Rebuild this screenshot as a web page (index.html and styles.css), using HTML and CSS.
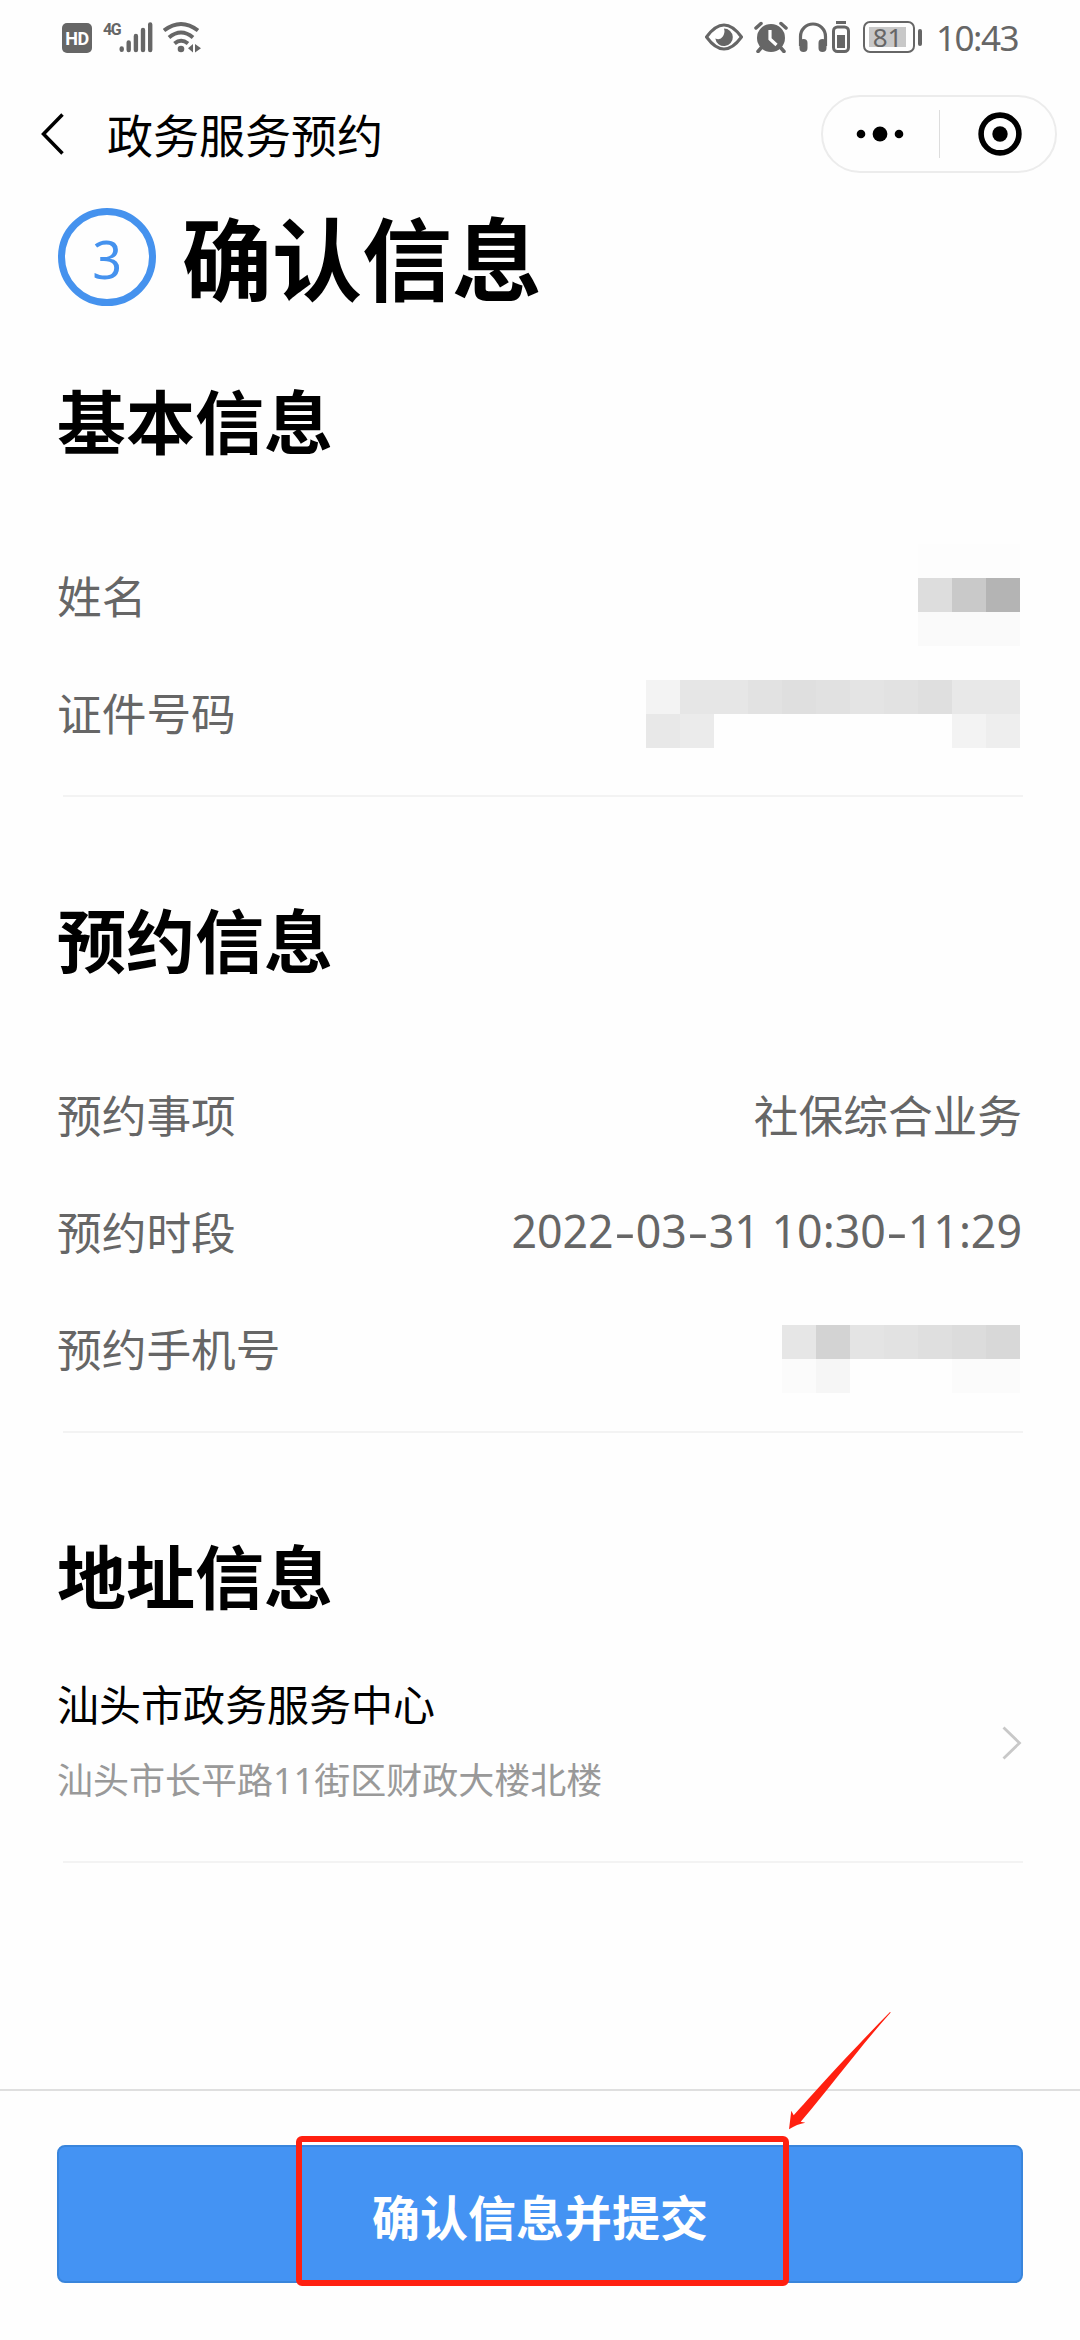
FILE: index.html
```html
<!DOCTYPE html>
<html lang="zh-CN">
<head>
    <meta charset="UTF-8">
    <meta name="viewport" content="width=device-width, initial-scale=1.0">
    <title>政务服务预约</title>
    <link rel="stylesheet" href="styles.css">
</head>
<body>

<div class="page">
    <div class="status-bar">
        <div class="status-left">
            <span class="hd">HD</span>
            <span class="net">4G</span>
            <svg class="signal" width="34" height="32" viewBox="0 0 34 32">
                <g stroke="#666" stroke-width="4.4" stroke-linecap="round">
                    <path d="M2.7 27.5v1.3M9.7 21.5v7.5M16.9 15v14M24 9v20M31.2 3.5V29"/>
                </g>
            </svg>
            <svg width="38" height="32" viewBox="0 0 38 32">
                <g fill="none" stroke="#666" stroke-width="4">
                    <path d="M1 9.500Q18 -3.500 35 9.500"/>
                    <path d="M6 16.500Q18 6.500 30 16.500"/>
                    <path d="M11.500 22.500Q18 17 25 22.500"/>
                </g>
                <circle cx="18" cy="28" r="3.300" fill="#666"/>
                <path d="M30 23v8.500l-5-4.200zM32 23v8.500l6-4.200z" fill="#666"/>
            </svg>
        </div>
        <div class="status-right">
            <svg class="eye" width="38" height="28" viewBox="0 0 38 28">
                <path d="M1.500 14Q19-10 36.500 14Q19 38 1.500 14z" fill="none" stroke="#666" stroke-width="3"/>
                <path d="M19 5.500a8.800 8.800 0 1 1-8.700 10q5 2 7.500-2t1.200-8z" fill="#666"/>
            </svg>
            <svg class="alarm" width="34" height="32" viewBox="0 0 34 32">
                <circle cx="17" cy="17" r="14" fill="#666"/>
                <path d="M2 7l5-4.500M32 7l-5-4.500M7 27l-3 3.500M27 27l3 3.500" stroke="#666" stroke-width="3.500" stroke-linecap="round"/>
                <path d="M16 9v9l6.500 6" fill="none" stroke="#fff" stroke-width="3.200"/>
            </svg>
            <svg class="headphones" width="30" height="32" viewBox="0 0 30 32">
                <path d="M2.500 25V15.500a12.500 12.500 0 0 1 25 0V25" fill="none" stroke="#666" stroke-width="3.200"/>
                <rect x="1.500" y="18" width="8" height="13" rx="4" fill="#666"/>
                <rect x="20.500" y="18" width="8" height="13" rx="4" fill="#666"/>
            </svg>
            <svg class="mini-battery" width="18" height="32" viewBox="0 0 18 32">
                <path d="M4 1.500h10" stroke="#666" stroke-width="3"/>
                <rect x="1.500" y="6" width="15" height="24.500" rx="4" fill="none" stroke="#666" stroke-width="3"/>
                <rect x="5" y="14" width="8" height="13" fill="#666"/>
            </svg>
            <span class="battery"><span class="battery-level">81</span></span>
            <span class="battery-tip"></span>
            <span class="time">10:43</span>
        </div>
    </div>

    <div class="nav">
        <svg width="24" height="42" viewBox="0 0 24 42">
            <path d="M21.500 1.500L2.500 21L21.500 40.500" fill="none" stroke="#000" stroke-width="3.500"/>
        </svg>
        <div class="nav-title">政务服务预约</div>
        <div class="capsule">
            <svg class="more" width="48" height="16" viewBox="0 0 48 16">
                <circle cx="5" cy="8" r="4.300"/>
                <circle cx="24" cy="8" r="7.400"/>
                <circle cx="43" cy="8" r="4.300"/>
            </svg>
            <span class="capsule-line"></span>
            <svg class="close" width="44" height="44" viewBox="0 0 44 44">
                <circle cx="22" cy="22" r="18.900" fill="none" stroke="#000" stroke-width="5.600"/>
                <circle cx="22" cy="22" r="7.700"/>
            </svg>
        </div>
    </div>

    <div class="step">
        <span class="step-number">3</span>
        <h1>确认信息</h1>
    </div>

    <div class="section first">
        <h2>基本信息</h2>
        <div class="row">
            <span>姓名</span>
            <svg class="mosaic" width="102" height="102" viewBox="0 0 3 3" shape-rendering="crispEdges">
                <path d="M0 0h3v1H0z" fill="#fdfdfd"/>
                <path d="M0 1h1v1H0z" fill="#ddd"/>
                <path d="M1 1h1v1H1z" fill="#c9c9c9"/>
                <path d="M2 1h1v1H2z" fill="#b4b4b4"/>
                <path d="M0 2h3v1H0z" fill="#fafafa"/>
            </svg>
        </div>
        <div class="row">
            <span>证件号码</span>
            <svg class="mosaic card" width="374" height="68" viewBox="0 0 11 2" shape-rendering="crispEdges">
                <path d="M0 0h1v1H0z" fill="#f3f3f3"/>
                <path d="M1 0h2v1H1z" fill="#e6e6e6"/>
                <path d="M3 0h1v1H3z" fill="#e2e2e2"/>
                <path d="M4 0h1v1H4z" fill="#dfdfdf"/>
                <path d="M5 0h1v1H5z" fill="#e1e1e1"/>
                <path d="M6 0h1v1H6z" fill="#e4e4e4"/>
                <path d="M7 0h1v1H7z" fill="#e2e2e2"/>
                <path d="M8 0h1v1H8z" fill="#dfdfdf"/>
                <path d="M9 0h2v1H9z" fill="#e8e8e8"/>
                <path d="M0 1h1v1H0z" fill="#e8e8e8"/>
                <path d="M1 1h1v1H1z" fill="#ebebeb"/>
                <path d="M9 1h1v1H9z" fill="#f3f3f3"/>
                <path d="M10 1h1v1h-1z" fill="#eee"/>
            </svg>
        </div>
    </div>

    <div class="section">
        <h2>预约信息</h2>
        <div class="row">
            <span>预约事项</span>
            <span>社保综合业务</span>
        </div>
        <div class="row">
            <span>预约时段</span>
            <span class="period">2022<i>-</i>03<i>-</i>31 10:30<i>-</i>11:29</span>
        </div>
        <div class="row">
            <span>预约手机号</span>
            <svg class="mosaic phone" width="238" height="68" viewBox="0 0 7 2" shape-rendering="crispEdges">
                <path d="M0 0h1v1H0z" fill="#e6e6e6"/>
                <path d="M1 0h1v1H1z" fill="#d3d3d3"/>
                <path d="M2 0h1v1H2z" fill="#e4e4e4"/>
                <path d="M3 0h1v1H3z" fill="#e2e2e2"/>
                <path d="M4 0h1v1H4z" fill="#dfdfdf"/>
                <path d="M5 0h1v1H5z" fill="#dcdcdc"/>
                <path d="M6 0h1v1H6z" fill="#d8d8d8"/>
                <path d="M0 1h1v1H0zM5 1h2v1H5z" fill="#fbfbfb"/>
                <path d="M1 1h1v1H1z" fill="#f6f6f6"/>
            </svg>
        </div>
    </div>

    <div class="section">
        <h2>地址信息</h2>
        <div class="place">
            <div>
                <div class="place-name">汕头市政务服务中心</div>
                <div class="place-address">汕头市长平路11街区财政大楼北楼</div>
            </div>
            <svg width="20" height="34" viewBox="0 0 20 34">
                <path d="M1.500 1.500L17.500 17L1.500 32.500" fill="none" stroke="#c8c8c8" stroke-width="2.800"/>
            </svg>
        </div>
    </div>

    <div class="footer">
        <button class="submit">确认信息并提交</button>
        <div class="mark"></div>
        <svg class="arrow" width="104" height="120" viewBox="0 0 104 120">
            <path d="M1 118.300L3.300 99.700L5.700 104.300C25 83 52 52 102 1L102.700 1.600C70 38 45 73 12.700 110.700L17.300 111.700Q9 113 1 118.300z" fill="#ff2010"/>
        </svg>
    </div>
</div>

</body>
</html>
```
FILE: styles.css
```css
body {
    margin: 0;
    background-color: #fefefe;
    font-family: "Noto Sans", "Noto Sans CJK SC", sans-serif;
    color: #000;
}
svg {
    display: block;
    flex-shrink: 0;
}
.page {
    display: flex;
    flex-direction: column;
    width: 1080px;
    height: 2340px;
}
.status-bar {
    display: flex;
    justify-content: space-between;
    height: 74px;
    box-sizing: border-box;
    padding: 21px 62px 0 62px;
    color: #666;
}
.status-left, .status-right {
    display: flex;
    height: 32px;
}
.hd {
    width: 30px;
    height: 30px;
    margin-top: 2px;
    border-radius: 5px;
    background-color: #666;
    color: #fff;
    font: bold 18px/31px Roboto, sans-serif;
    letter-spacing: -0.500px;
    text-align: center;
}
.net {
    width: 16px;
    margin-left: 11px;
    font: bold 16px/17px "Roboto", sans-serif;
    letter-spacing: -1.500px;
}
.signal {
    margin-right: 10px;
}
.eye {
    margin-top: 2px;
    margin-right: 11px;
}
.alarm {
    margin-right: 10px;
}
.headphones {
    margin-right: 4px;
}
.mini-battery {
    margin-right: 13px;
}
.battery {
    width: 52px;
    height: 32px;
    box-sizing: border-box;
    padding: 4px;
    border: 2.500px solid #666;
    border-radius: 7px;
}
.battery-level {
    display: block;
    width: 37px;
    height: 20px;
    background-color: #c8c8c8;
    font-size: 26px;
    line-height: 21px;
    text-align: center;
}
.battery-tip {
    width: 4px;
    height: 17px;
    margin: 8px 14px 0 3px;
    border-radius: 2px;
    background-color: #666;
}
.time {
    width: 82px;
    font-size: 35px;
    line-height: 34px;
    letter-spacing: -1.500px;
}
.nav {
    display: flex;
    align-items: center;
    height: 120px;
    padding: 0 23px 0 41px;
}
.nav-title {
    margin-top: 1px;
    margin-left: 42px;
    font-size: 46px;
    line-height: 60px;
}
.capsule {
    display: flex;
    align-items: center;
    width: 236px;
    height: 78px;
    box-sizing: border-box;
    margin-left: auto;
    border: 2px solid #ececec;
    border-radius: 39px;
}
.more {
    margin-left: 33px;
}
.capsule-line {
    width: 1px;
    height: 48px;
    margin: 0 38px 0 35px;
    background-color: #ddd;
}
.step {
    display: flex;
    align-items: center;
    height: 126px;
    padding-left: 58px;
}
.step-number {
    width: 98px;
    height: 98px;
    box-sizing: border-box;
    border: 7px solid #4592ee;
    border-radius: 50%;
    color: #4592ee;
    font-size: 52px;
    line-height: 88px;
    text-align: center;
}
h1 {
    margin: 3px 0 0 26px;
    font-size: 90px;
    line-height: 120px;
}
.section {
    margin: 0 57px 0 63px;
    padding-top: 42px;
    border-bottom: 2px solid #f3f3f3;
}
.section.first {
    padding-top: 0;
}
/* text starts slightly left of the divider */
.section > * {
    margin-left: -6px;
}
h2 {
    margin-top: 0;
    margin-bottom: 0;
    font-size: 69px;
    line-height: 204px;
}
.row {
    display: flex;
    justify-content: space-between;
    align-items: center;
    height: 117px;
    padding-right: 1px;
    color: #666;
    font-size: 44.700px;
}
h2 + .row {
    margin-top: 12px;
}
.row:last-child {
    margin-bottom: 25px;
}
.mosaic {
    margin-right: 2px;
}
.card {
    margin-top: 4px;
}
.phone {
    margin-top: 22px;
}
.period i {
    display: inline-block;
    width: 22px;
    font-style: normal;
    text-align: center;
    transform: scaleX(1.450);
}
.place {
    display: flex;
    justify-content: space-between;
    align-items: center;
    padding-bottom: 55px;
}
.place svg {
    margin-right: 1px;
}
.place-name {
    margin-bottom: 25px;
    font-size: 42px;
    line-height: 52px;
}
.place-address {
    color: #999;
    font-size: 36px;
    line-height: 50px;
}
.footer {
    position: relative;
    margin-top: auto;
    padding: 54px 57px 57px;
    border-top: 2px solid #dfdfdf;
}
.submit {
    display: block;
    width: 100%;
    height: 138px;
    padding: 2px 0 0;
    border: 2px solid #3985dc;
    border-radius: 8px;
    background-color: #4493f3;
    color: #fff;
    font-family: inherit;
    font-size: 48px;
    font-weight: bold;
}
/* highlight over the submit button */
.mark {
    position: absolute;
    top: 45px;
    left: 296px;
    width: 493px;
    height: 150px;
    box-sizing: border-box;
    border: 6px solid #ff2010;
    border-radius: 6px;
}
.arrow {
    position: absolute;
    top: -80px;
    left: 788px;
}
```
